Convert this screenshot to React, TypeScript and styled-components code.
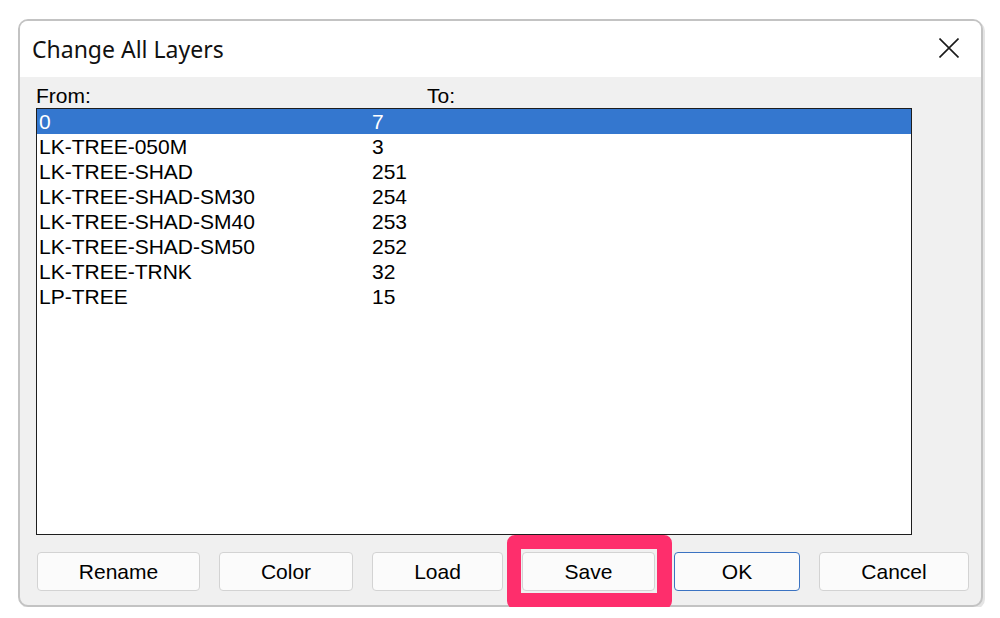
import React from 'react';
import styled, { createGlobalStyle } from 'styled-components';

const GlobalStyle = createGlobalStyle`
  html, body {
    margin: 0;
    background: #ffffff;
  }
  body {
    font-family: "Liberation Sans", Arial, sans-serif;
  }
`;

const Page = styled.div`
  padding: 19px 0 0 18px;
`;

const Dialog = styled.div`
  width: 965px;
  height: 588px;
  box-sizing: border-box;
  border: 2px solid #c3c3c3;
  border-radius: 10px;
  box-shadow: 2px 2px 0 #e4e4e4;
  background: #f0f0f0;
  display: flex;
  flex-direction: column;
`;

const TitleBar = styled.div`
  height: 56px;
  flex: none;
  box-sizing: border-box;
  background: #ffffff;
  border-radius: 8px 8px 0 0;
  display: flex;
  align-items: flex-start;
  justify-content: space-between;
  padding: 13px 22px 0 12px;
`;

const Title = styled.div`
  font-family: "Noto Sans", "Open Sans", sans-serif;
  font-size: 23px;
  line-height: 30px;
  color: #111111;
`;

const CloseIcon = styled.svg`
  display: block;
  margin-top: 4px;
`;

const Body = styled.div`
  flex: 1;
  padding: 6px 0 0 16px;
  display: flex;
  flex-direction: column;
`;

const LabelRow = styled.div`
  display: flex;
  height: 25px;
  font-size: 21px;
  line-height: 25px;
  color: #000000;
`;

const Label = styled.div<{ $w?: number }>`
  width: ${(p) => (p.$w ? `${p.$w}px` : 'auto')};
`;

const ListBox = styled.div`
  width: 876px;
  height: 427px;
  box-sizing: border-box;
  border: 1px solid #1e1e1e;
  background: #ffffff;
`;

const Row = styled.div<{ $selected?: boolean }>`
  display: flex;
  height: 25px;
  line-height: 25px;
  font-size: 21px;
  padding-left: 2px;
  background: ${(p) => (p.$selected ? '#3477cf' : 'transparent')};
  color: ${(p) => (p.$selected ? '#ffffff' : '#000000')};
`;

const NameCell = styled.div`
  width: 333px;
`;

const ButtonRow = styled.div`
  display: flex;
  gap: 19px;
  margin-top: 17px;
  padding-left: 1px;
`;

const Button = styled.button<{ $w: number; $default?: boolean }>`
  width: ${(p) => p.$w}px;
  height: 39px;
  box-sizing: border-box;
  border: 1px solid ${(p) => (p.$default ? '#3b73c2' : '#d3d3d3')};
  border-radius: 4px;
  background: #fbfbfb;
  font-family: "Liberation Sans", Arial, sans-serif;
  font-size: 21px;
  color: #000000;
  padding: 0;
`;

const Highlighted = styled.div`
  position: relative;
  display: flex;
`;

const Highlight = styled.div`
  position: absolute;
  left: -15px;
  top: -17px;
  width: 165px;
  height: 74px;
  box-sizing: border-box;
  border-style: solid;
  border-color: #fe2e6c;
  border-width: 14px 15px 16px 14px;
  border-radius: 8px;
  pointer-events: none;
`;

const layers = [
  { name: '0', to: '7' },
  { name: 'LK-TREE-050M', to: '3' },
  { name: 'LK-TREE-SHAD', to: '251' },
  { name: 'LK-TREE-SHAD-SM30', to: '254' },
  { name: 'LK-TREE-SHAD-SM40', to: '253' },
  { name: 'LK-TREE-SHAD-SM50', to: '252' },
  { name: 'LK-TREE-TRNK', to: '32' },
  { name: 'LP-TREE', to: '15' },
];

const App = () => {
  return (
    <Page>
      <GlobalStyle />
      <Dialog>
        <TitleBar>
          <Title>Change All Layers</Title>
          <CloseIcon width="20" height="20" viewBox="0 0 20 20">
            <path d="M0.5 0.5 L19.5 19.5 M19.5 0.5 L0.5 19.5" stroke="#1a1a1a" strokeWidth="1.6" fill="none" />
          </CloseIcon>
        </TitleBar>
        <Body>
          <LabelRow>
            <Label $w={391}>From:</Label>
            <Label>To:</Label>
          </LabelRow>
          <ListBox>
            {layers.map((layer, index) => (
              <Row key={layer.name} $selected={index === 0}>
                <NameCell>{layer.name}</NameCell>
                <div>{layer.to}</div>
              </Row>
            ))}
          </ListBox>
          <ButtonRow>
            <Button $w={163}>Rename</Button>
            <Button $w={134}>Color</Button>
            <Button $w={131}>Load</Button>
            <Highlighted>
              <Button $w={133}>Save</Button>
              <Highlight />
            </Highlighted>
            <Button $w={126} $default>
              OK
            </Button>
            <Button $w={150}>Cancel</Button>
          </ButtonRow>
        </Body>
      </Dialog>
    </Page>
  );
};

export default App;
